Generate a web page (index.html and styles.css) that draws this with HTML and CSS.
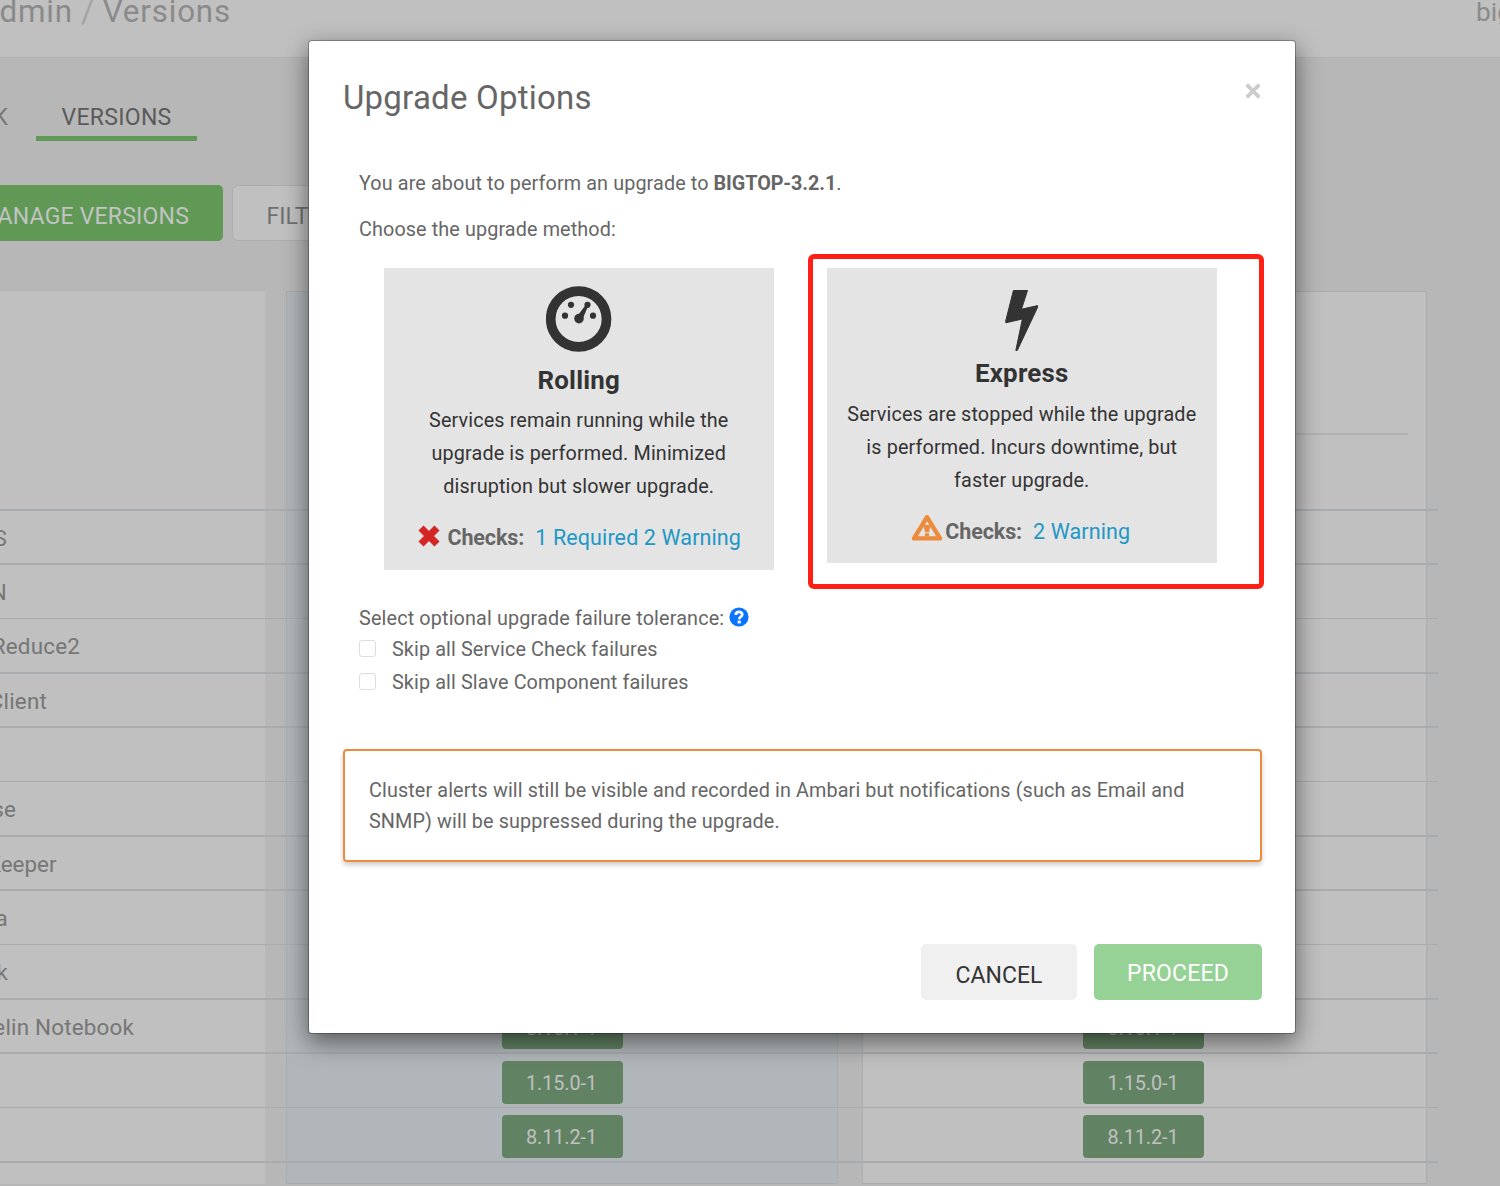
FILE: index.html
```html
<!DOCTYPE html>
<html lang="en">
<head>
<meta charset="utf-8">
<title>Upgrade Options</title>
<link rel="stylesheet" href="styles.css">
</head>
<body>
<div class="page">
  <header class="topbar">
    <div class="crumbs"><span>Admin</span><span class="slash">/</span><span>Versions</span></div>
    <div class="cluster">bigtop</div>
  </header>
  <nav class="tabs">
    <div class="tab tab-stack">STACK</div>
    <div class="tab tab-active">VERSIONS</div>
  </nav>
  <div class="toolbar">
    <div class="btn-manage">MANAGE VERSIONS</div>
    <div class="btn-filter">FILTER</div>
  </div>
  <main class="table">
    <div class="row row-head"><div class="name"></div><div class="col current"><i class="rule"></i></div><div class="col"><i class="rule"></i></div></div>
    <div class="row"><div class="name"><span>HDFS</span></div><div class="col current"></div><div class="col"></div></div>
    <div class="row"><div class="name n2"><span>YARN</span></div><div class="col current"></div><div class="col"></div></div>
    <div class="row"><div class="name n3"><span>MapReduce2</span></div><div class="col current"></div><div class="col"></div></div>
    <div class="row"><div class="name n4"><span>Tez Client</span></div><div class="col current"></div><div class="col"></div></div>
    <div class="row"><div class="name"></div><div class="col current"></div><div class="col"></div></div>
    <div class="row"><div class="name n6"><span>HBase</span></div><div class="col current"></div><div class="col"></div></div>
    <div class="row"><div class="name n7"><span>ZooKeeper</span></div><div class="col current"></div><div class="col"></div></div>
    <div class="row"><div class="name n8"><span>Kafka</span></div><div class="col current"></div><div class="col"></div></div>
    <div class="row"><div class="name n9"><span>Spark</span></div><div class="col current"></div><div class="col"></div></div>
    <div class="row"><div class="name n10"><span>Zeppelin Notebook</span></div><div class="col current"><b class="badge">3.18.1-1</b></div><div class="col"><b class="badge">3.18.1-1</b></div></div>
    <div class="row"><div class="name"></div><div class="col current"><b class="badge">1.15.0-1</b></div><div class="col"><b class="badge">1.15.0-1</b></div></div>
    <div class="row"><div class="name"></div><div class="col current"><b class="badge">8.11.2-1</b></div><div class="col"><b class="badge">8.11.2-1</b></div></div>
    <div class="row row-tail"><div class="name"></div><div class="col current"></div><div class="col"></div></div>
  </main>

  <section class="modal">
    <div class="modal-head">
      <h1>Upgrade Options</h1>
      <svg class="close" width="16" height="16" viewBox="0 0 16 16"><path d="M1.7 1.7 14.3 14.3M14.3 1.7 1.7 14.3" stroke="#ccc" stroke-width="3.8"/></svg>
    </div>
    <div class="modal-body">
      <p class="intro">You are about to perform an upgrade to <strong>BIGTOP-3.2.1</strong>.</p>
      <p class="choose">Choose the upgrade method:</p>
      <div class="methods">
        <div class="card">
          <svg class="gauge" width="66" height="66" viewBox="0 0 66 66"><circle cx="32.6" cy="33" r="27.9" fill="none" stroke="#333" stroke-width="9.7"/><g fill="#333"><circle cx="19" cy="29.7" r="3.1"/><circle cx="25" cy="18.8" r="3.1"/><circle cx="41.5" cy="18.8" r="3.1"/><circle cx="47" cy="29.7" r="3.1"/><circle cx="33" cy="32.6" r="4.8"/><path d="M32.5 28.5 40 18.5 42.2 20 37 32z"/></g></svg>
          <h2>Rolling</h2>
          <p>Services remain running while the<br>upgrade is performed. Minimized<br>disruption but slower upgrade.</p>
          <div class="checks">
            <svg class="fail" width="22" height="22" viewBox="0 0 22 22"><path d="M3 3 19 19M19 3 3 19" stroke="#d52626" stroke-width="7.2"/></svg>
            <strong>Checks:</strong><a>1 Required 2 Warning</a>
          </div>
        </div>
        <div class="card">
          <svg class="bolt" width="36" height="63" viewBox="0 0 36 63"><path d="M9.4 1.5 23.5 1.5 17.5 20.2 33.6 16.6 33.6 18.3 13.3 61.4 11.8 61.4 18.4 30 1.8 33.8 1.7 32z" fill="#333" stroke="#333" stroke-linejoin="round"/></svg>
          <h2>Express</h2>
          <p>Services are stopped while the upgrade<br>is performed. Incurs downtime, but<br>faster upgrade.</p>
          <div class="checks">
            <svg class="warn" width="32" height="27" viewBox="0 0 32 27"><path d="M16 3.2 29 24.4H3z" fill="none" stroke="#ec8b3c" stroke-width="4.4" stroke-linejoin="round"/><path d="M12.4 11h7.2l-1.6 7.2h-4zM14 19.2h4v3h-4z" fill="#ec8b3c"/></svg>
            <strong>Checks:</strong><a>2 Warning</a>
          </div>
        </div>
      </div>
      <div class="tolerance">
        <span>Select optional upgrade failure tolerance:</span>
        <svg width="20" height="20" viewBox="0 0 20 20"><circle cx="10" cy="10" r="9.6" fill="#0a74ff"/><path d="M6.8 8C6.8 3.8 13.2 4 13.2 7.5 13.2 9.8 10.2 9.7 10.2 12.3" fill="none" stroke="#fff" stroke-width="2.8"/><path d="M8.6 13.6h3.2v2.8H8.6z" fill="#fff"/></svg>
      </div>
      <label class="option"><i class="box"></i><span>Skip all Service Check failures</span></label>
      <label class="option"><i class="box"></i><span>Skip all Slave Component failures</span></label>
    </div>
    <div class="alert">Cluster alerts will still be visible and recorded in Ambari but notifications (such as Email and<br>SNMP) will be suppressed during the upgrade.</div>
    <footer class="actions">
      <div class="btn-cancel">CANCEL</div>
      <div class="btn-proceed">PROCEED</div>
    </footer>
    <div class="highlight"></div>
  </section>
</div>
</body>
</html>
```
FILE: styles.css
```css
* { box-sizing: border-box; }
body { margin: 0; font-family: Roboto, "Liberation Sans", sans-serif; color: #666; }
h1, h2, p { margin: 0; }
.page { position: relative; width: 1500px; height: 1186px; overflow: hidden; background: #b7b7b7; display: flex; flex-direction: column; }

.topbar { height: 58px; flex: none; background: #c0c0c0; border-bottom: 1px solid #b0b0b0; display: flex; justify-content: space-between; overflow: hidden; color: #8a8a8a; white-space: nowrap; }
.crumbs { width: 231px; display: flex; justify-content: flex-end; gap: 8px; font-size: 31.4px; letter-spacing: .8px; line-height: 34px; margin-top: -5px; }
.slash { color: #a3a3a3; }
.cluster { width: 24px; font-size: 26.3px; line-height: 30px; margin-top: -3px; }

.tabs { display: flex; height: 83px; flex: none; align-items: flex-end; font-size: 23px; white-space: nowrap; }
.tab { height: 38px; line-height: 30px; }
.tab-stack { width: 36px; display: flex; justify-content: flex-end; padding-right: 28px; color: #777; }
.tab-active { width: 161px; text-align: center; border-bottom: 5px solid #5f9955; color: #5a5a5a; letter-spacing: .3px; }

.toolbar { display: flex; gap: 9px; margin-top: 44px; height: 56px; flex: none; font-size: 23px; line-height: 63px; white-space: nowrap; }
.btn-manage { width: 223px; background: #5f9955; color: #c3c3c3; border-radius: 0 5px 5px 0; display: flex; justify-content: flex-end; padding-right: 34px; letter-spacing: .2px; overflow: hidden; }
.btn-filter { width: 150px; background: #c0c0c0; border: 1.6px solid #adadad; border-radius: 6px; padding-left: 33.6px; color: #707070; line-height: 61px; }

.table { margin-top: 50px; display: flex; flex-direction: column; }
.row { display: grid; grid-template-columns: 265px 552px 565px; column-gap: 21px; width: 1438px; height: 54.35px; flex: none; position: relative; }
.row::after { content: ""; position: absolute; left: 0; right: 0; bottom: 0; height: 1.5px; background: #a8acaf; }
.row-head { height: 219.5px; }
.row-tail { height: 21.5px; }
.row-tail::after { display: none; }
.name { background: #c0c0c0; font-size: 22.4px; line-height: 54px; display: flex; white-space: nowrap; overflow: hidden; justify-content: flex-end; letter-spacing: .2px; padding-right: 258px; color: #767676; }
.n3 { padding-right: 185px; }
.n4 { padding-right: 218px; }
.n6 { padding-right: 249px; }
.n7 { padding-right: 208.5px; letter-spacing: 0; }
.n8, .n9 { padding-right: 257px; }
.n10 { padding-right: 131px; }
.col { background: #c0c0c0; border: solid #a8adb0; border-width: 0 1.5px; display: flex; justify-content: center; align-items: center; margin-left: 3px; width: 565px; padding: 2px 2px 0 0; }
.col.current { background: #b0b6b9; margin-left: 0; width: 552px; padding-right: 0; }
.row-head .col { border-top-width: 1.5px; align-items: flex-start; padding: 141px 18px 0; }
.row-tail .col { border-bottom-width: 1.5px; }
.rule { flex: 1; height: 2px; background: #b2b2b2; }
.badge { width: 121px; height: 43px; border-radius: 4px; background: #628363; color: #c0c0c0; font-weight: 400; font-size: 19.8px; letter-spacing: -.05px; line-height: 46px; text-align: center; padding-right: 1px; }

.modal { position: absolute; left: 308px; top: 40px; width: 988px; height: 994px; padding: 0 33px; border: 1.6px solid rgba(0,0,0,.27); background: #fff; background-clip: padding-box; border-radius: 4px; box-shadow: 0 8px 25px rgba(0,0,0,.5); font-size: 19.8px; letter-spacing: .115px; display: flex; flex-direction: column; }
.modal-head { display: flex; justify-content: space-between; height: 120px; padding: 36px 1px 0 1px; }
h1 { font-size: 33px; font-weight: 400; line-height: 42px; letter-spacing: .22px; }
.close { margin-top: 6px; }
.modal-body { padding: 0 17px; height: 588px; }
.intro { line-height: 31px; margin-top: 7px; letter-spacing: .11px; }
.intro strong { letter-spacing: -.08px; }
.choose { line-height: 31px; margin-top: 15px; }
.methods { display: flex; align-items: flex-start; gap: 53.5px; padding-left: 25px; margin-top: 23px; height: 334px; }
.card { width: 389.5px; background: #e4e4e4; color: #333; display: flex; flex-direction: column; align-items: center; text-align: center; padding-bottom: 16px; white-space: nowrap; }
.gauge { margin-top: 18px; }
.bolt { margin-top: 21px; }
h2 { font-size: 25.9px; font-weight: 700; line-height: 30px; margin-top: 13px; letter-spacing: .2px; }
.bolt + h2 { margin-top: 6px; }
.card p { line-height: 33px; margin-top: 9px; letter-spacing: .13px; }
.card .bolt ~ p { margin-top: 10px; }
.checks { display: flex; align-items: center; height: 33px; margin-top: 18px; padding-left: 2px; font-size: 21.5px; color: #666; }
.bolt ~ .checks { margin-top: 17px; padding: 1px 2px 0 0; }
.checks strong { letter-spacing: -.1px; }
.checks a { color: #2197c6; margin-left: 11px; }
.fail { margin: -4px 7px 0 0; }
.warn { margin: -7px 2px 0 0; }
.tolerance { display: flex; align-items: center; gap: 5px; height: 30px; }
.tolerance span { padding-top: 2px; letter-spacing: .15px; }
.option span { padding-top: 1px; }
.option { display: flex; align-items: center; gap: 16px; height: 33px; }
.box { width: 17px; height: 17px; border: 1.6px solid #ddd; border-radius: 3px; }
.alert { height: 113px; margin: 0 0 0 1px; width: 919px; border: 2px solid #ec8b3c; border-radius: 4px; box-shadow: 0 3px 5px rgba(0,0,0,.2); padding: 25px 24px 0; line-height: 30.6px; white-space: nowrap; }
.actions { display: flex; justify-content: flex-end; gap: 17px; margin-top: 82px; font-size: 23px; letter-spacing: 0; text-align: center; }
.btn-cancel { width: 156px; height: 56px; line-height: 63px; background: #f0f0f0; color: #333; border-radius: 5px; }
.btn-proceed { width: 168px; height: 56px; line-height: 59px; background: #96d296; color: #fff; border-radius: 5px; letter-spacing: .2px; }
.highlight { position: absolute; left: 499px; top: 213px; width: 456px; height: 335px; border: 5px solid #ff2015; border-radius: 6px; }
```
